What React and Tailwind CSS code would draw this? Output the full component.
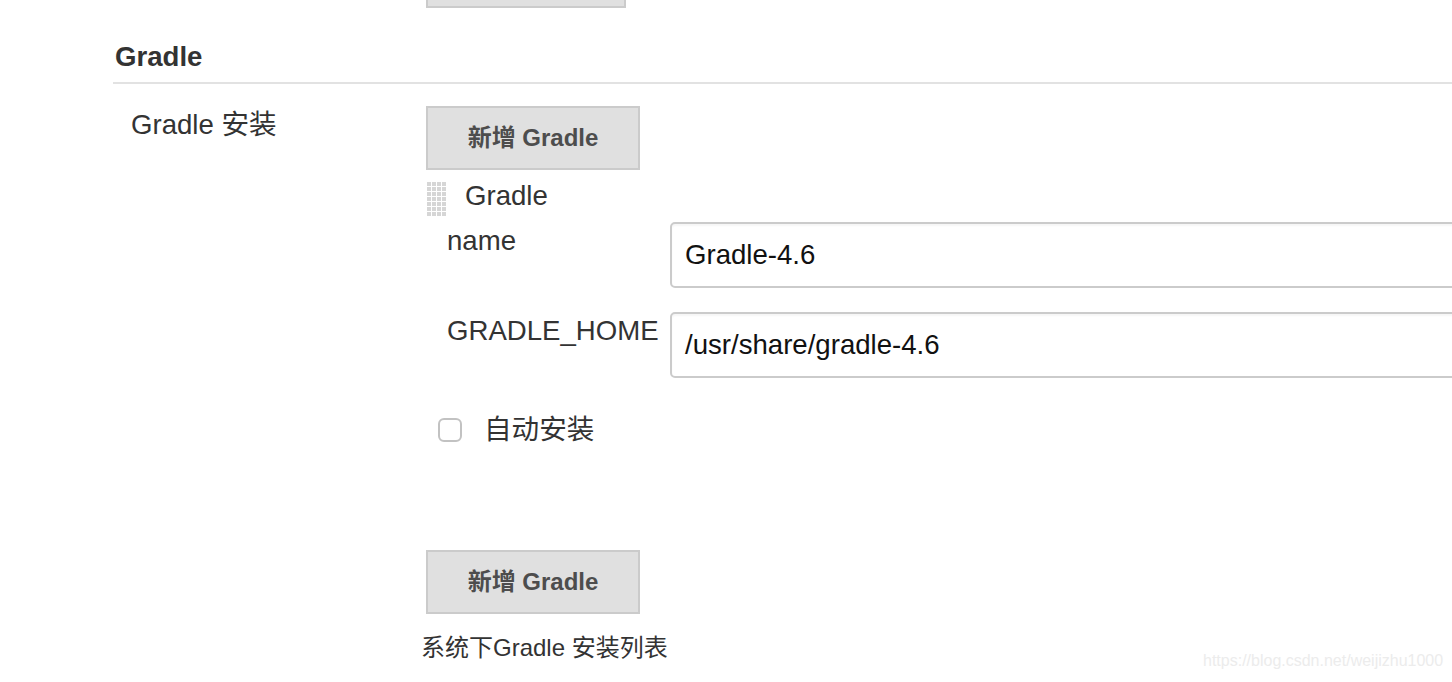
import React from 'react';

const FONT = { fontFamily: '"Liberation Sans", Arial, "Noto Sans CJK SC", sans-serif' };

function DragHandle() {
  const dots = [];
  for (let r = 0; r < 7; r++) {
    for (let c = 0; c < 4; c++) {
      dots.push(<rect key={`${r}-${c}`} x={c * 5 + 1} y={r * 5 + 1} width="4" height="4" fill="#d6d6d6" />);
    }
  }
  return (
    <svg width="22" height="36" viewBox="0 0 22 36" className="shrink-0">
      {dots}
    </svg>
  );
}

function AddButton() {
  return (
    <button className="w-[214px] h-[64px] bg-[#e0e0e0] border-2 border-[#cbcbcb] text-[24px] font-bold text-[#4d4d4d] leading-none">
      新增 Gradle
    </button>
  );
}

function Field({ label, value }) {
  return (
    <div className="flex items-start">
      <div className="w-[244px] shrink-0 pl-[21px] pt-[3px] text-[27.6px] leading-[32px] text-[#333] whitespace-nowrap">{label}</div>
      <div className="w-[900px] shrink-0 h-[66px] border-2 border-[#cbcbcb] rounded-[5px] bg-white flex items-center pl-[13px] text-[27.6px] text-[#111] shadow-[inset_0_2px_2px_rgba(0,0,0,0.04)]">
        {value}
      </div>
    </div>
  );
}

export default function App() {
  return (
    <div className="relative w-full h-[682px] bg-white overflow-hidden" style={FONT}>
      {/* cut-off button from the previous section */}
      <div className="ml-[426px] w-[200px] h-[8px] bg-[#e0e0e0] border-2 border-t-0 border-[#cbcbcb]" />

      <div className="pl-[115px] pt-[33px] text-[27.6px] leading-[32px] font-bold text-[#333]">Gradle</div>
      <div className="ml-[113px] mt-[9px] border-t-2 border-[#e2e2e2]" />

      <div className="flex pt-[22px]">
        <div className="w-[426px] shrink-0 pl-[131px] pt-[3px] text-[27.6px] leading-[32px] text-[#333]">Gradle 安装</div>

        <div className="flex-1 min-w-0">
          <AddButton />

          <div className="mt-[11px] flex items-start h-[36px]">
            <DragHandle />
            <span className="ml-[17px] -mt-[1px] text-[27.6px] leading-[32px] text-[#333]">Gradle</span>
          </div>

          <div className="mt-[5px] flex flex-col gap-[24px]">
            <Field label="name" value="Gradle-4.6" />
            <Field label="GRADLE_HOME" value="/usr/share/gradle-4.6" />
          </div>

          <div className="mt-[37px] flex items-center h-[30px]">
            <div className="ml-[12px] w-[24px] h-[24px] border-2 border-[#c2c2c2] rounded-[6px] bg-white" />
            <span className="ml-[22px] text-[27.6px] leading-[32px] text-[#333]">自动安装</span>
          </div>

          <div className="mt-[105px]">
            <AddButton />
          </div>

          <div className="-ml-[5px] mt-[19px] text-[24px] leading-[30px] text-[#333]">系统下Gradle 安装列表</div>
        </div>
      </div>

      <div className="absolute left-[1203px] top-[651px] text-[16px] leading-[20px] text-[#ececec]">
        https://blog.csdn.net/weijizhu1000
      </div>
    </div>
  );
}
